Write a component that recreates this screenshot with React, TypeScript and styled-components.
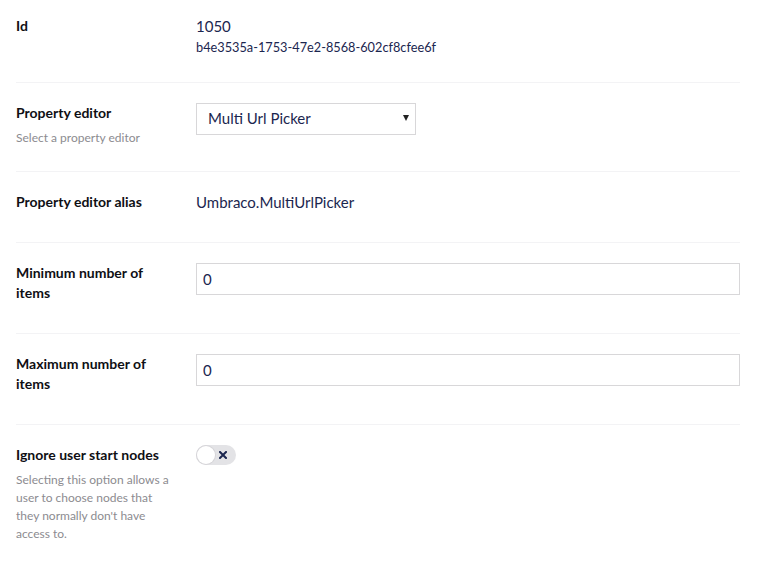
import React from "react";
import styled, { createGlobalStyle } from "styled-components";

const color = {
  text: "#1b264f",
  label: "#0f0f14",
  muted: "#8c8b90",
  border: "#d8d7d9",
  divider: "#f3f3f5",
  toggle: "#e3e3e6",
};

const GlobalStyle = createGlobalStyle`
  html, body {
    margin: 0;
    padding: 0;
    background: #fff;
  }
  body {
    font-family: Lato, "Open Sans", sans-serif;
    color: ${color.text};
  }
`;

const Page = styled.div`
  padding: 0 18px 0 16px;
`;

const Property = styled.div`
  display: grid;
  grid-template-columns: 160px 1fr;
  column-gap: 20px;
  align-items: start;
  padding: 20px 0 24px;
  border-bottom: 1px solid ${color.divider};
  &:first-child {
    padding-top: 16px;
    padding-bottom: 25px;
  }
  &:last-child {
    border-bottom: none;
  }
`;

const LabelBlock = styled.div`
  display: flex;
  flex-direction: column;
`;

const Label = styled.div`
  font-size: 14px;
  line-height: 20px;
  font-weight: 700;
  color: ${color.label};
  margin-bottom: 6px;
`;

const Description = styled.div`
  font-size: 12px;
  line-height: 18px;
  color: ${color.muted};
`;

const Value = styled.div`
  font-size: 15px;
  line-height: 20px;
  color: ${color.text};
`;

const SubValue = styled.div`
  font-size: 12.75px;
  line-height: 20px;
  margin-top: 1px;
  color: ${color.text};
`;

const SelectWrap = styled.div`
  position: relative;
  width: 220px;
`;

const Select = styled.select`
  appearance: none;
  -webkit-appearance: none;
  width: 100%;
  height: 32px;
  box-sizing: border-box;
  border: 1px solid ${color.border};
  border-radius: 0;
  background: #fff;
  padding: 0 24px 2px 11px;
  font-family: Lato, "Open Sans", sans-serif;
  font-size: 15px;
  color: ${color.text};
  outline: none;
`;

const Caret = styled.span`
  position: absolute;
  right: 7px;
  top: 12px;
  width: 0;
  height: 0;
  border-left: 3.5px solid transparent;
  border-right: 3.5px solid transparent;
  border-top: 6px solid #222;
  pointer-events: none;
`;

const TextInput = styled.input`
  width: 100%;
  height: 32px;
  box-sizing: border-box;
  border: 1px solid ${color.border};
  border-radius: 0;
  padding: 0 6px;
  font-family: Lato, "Open Sans", sans-serif;
  font-size: 15px;
  color: ${color.text};
  outline: none;
`;

const Toggle = styled.button<{ $on?: boolean }>`
  display: flex;
  align-items: center;
  justify-content: space-between;
  width: 40px;
  height: 20px;
  box-sizing: border-box;
  padding: 0 9px 0 1px;
  border: none;
  border-radius: 10px;
  background: ${(p) => (p.$on ? "#2bc37c" : color.toggle)};
  cursor: pointer;
`;

const Knob = styled.span`
  width: 18px;
  height: 18px;
  border-radius: 50%;
  background: #fff;
  box-shadow: 0 0 0 1px #d6d5d9;
`;

const XIcon = () => (
  <svg width="8" height="8" viewBox="0 0 8 8">
    <path d="M1 1 L7 7 M7 1 L1 7" stroke={color.text} strokeWidth="2" strokeLinecap="square" />
  </svg>
);

export default function App() {
  return (
    <Page>
      <GlobalStyle />
      <Property>
        <LabelBlock>
          <Label>Id</Label>
        </LabelBlock>
        <div>
          <Value>1050</Value>
          <SubValue>b4e3535a-1753-47e2-8568-602cf8cfee6f</SubValue>
        </div>
      </Property>

      <Property>
        <LabelBlock>
          <Label>Property editor</Label>
          <Description>Select a property editor</Description>
        </LabelBlock>
        <SelectWrap>
          <Select defaultValue="multi">
            <option value="multi">Multi Url Picker</option>
          </Select>
          <Caret />
        </SelectWrap>
      </Property>

      <Property>
        <LabelBlock>
          <Label>Property editor alias</Label>
        </LabelBlock>
        <Value>Umbraco.MultiUrlPicker</Value>
      </Property>

      <Property>
        <LabelBlock>
          <Label>Minimum number of items</Label>
        </LabelBlock>
        <TextInput defaultValue="0" />
      </Property>

      <Property>
        <LabelBlock>
          <Label>Maximum number of items</Label>
        </LabelBlock>
        <TextInput defaultValue="0" />
      </Property>

      <Property>
        <LabelBlock>
          <Label>Ignore user start nodes</Label>
          <Description>
            Selecting this option allows a user to choose nodes that they
            normally don't have access to.
          </Description>
        </LabelBlock>
        <div>
          <Toggle type="button">
            <Knob />
            <XIcon />
          </Toggle>
        </div>
      </Property>
    </Page>
  );
}
